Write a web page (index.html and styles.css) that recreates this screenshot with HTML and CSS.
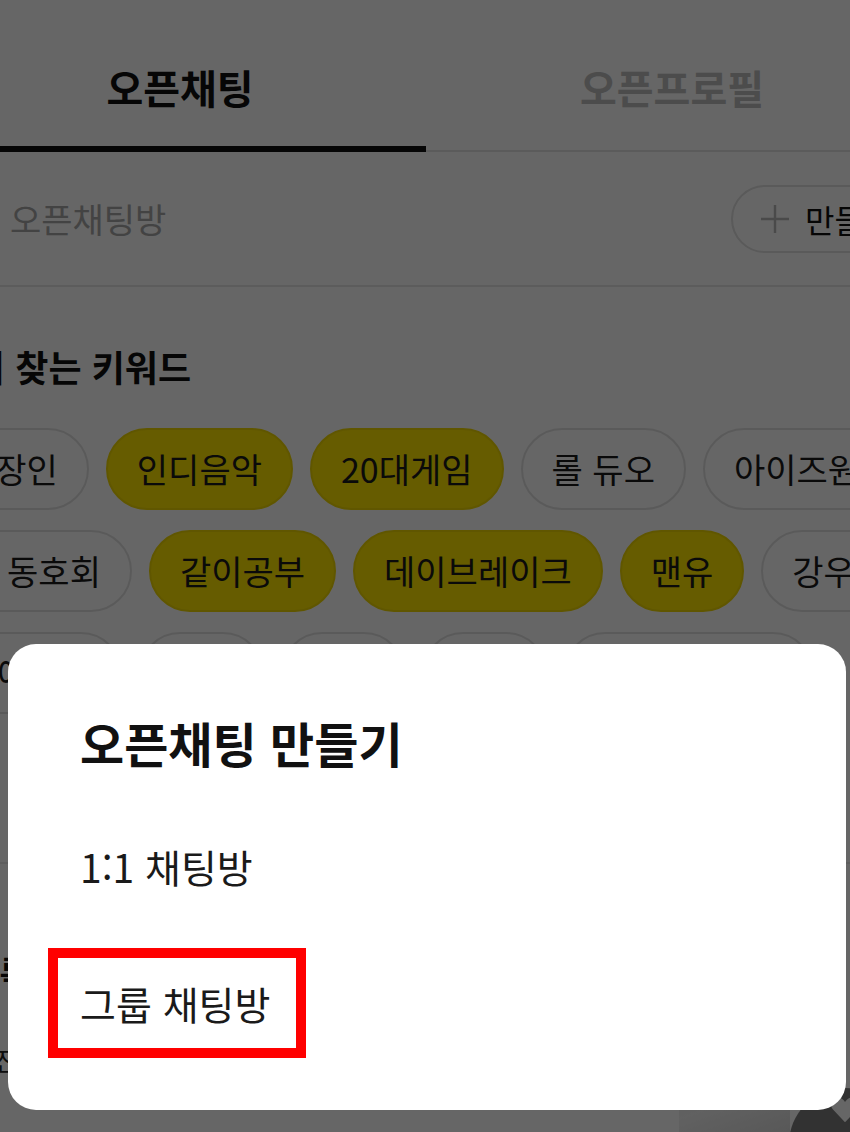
FILE: index.html
```html
<!DOCTYPE html>
<html lang="ko">
<head>
    <meta charset="UTF-8">
    <meta name="viewport" content="width=device-width, initial-scale=1.0">
    <title>오픈채팅</title>
    <link rel="stylesheet" href="styles.css">
</head>
<body>
    <div class="app">
        <nav class="tabs">
            <div class="tab tab-active">오픈채팅</div>
            <div class="tab">오픈프로필</div>
        </nav>

        <div class="search-row">
            <span class="search-label">오픈채팅방</span>
            <button class="create-btn">
                <svg class="plus-icon" viewBox="0 0 30 30" width="30" height="30">
                    <path d="M15 1 V29 M1 15 H29" stroke="currentColor" stroke-width="2.4" fill="none"/>
                </svg>
                만들기
            </button>
        </div>

        <section class="keywords">
            <h2 class="section-title">많이 찾는 키워드</h2>
            <div class="chip-rows">
                <div class="chip-row row-1">
                    <span class="chip">직장인</span>
                    <span class="chip chip-hot">인디음악</span>
                    <span class="chip chip-hot">20대게임</span>
                    <span class="chip">롤 듀오</span>
                    <span class="chip">아이즈원</span>
                </div>
                <div class="chip-row row-2">
                    <span class="chip">독서 동호회</span>
                    <span class="chip chip-hot">같이공부</span>
                    <span class="chip chip-hot">데이브레이크</span>
                    <span class="chip chip-hot">맨유</span>
                    <span class="chip">강우지</span>
                </div>
                <div class="chip-row row-3">
                    <span class="chip">연애상담</span>
                    <span class="chip">축구</span>
                    <span class="chip">주식</span>
                    <span class="chip">여행</span>
                    <span class="chip">해외축구중계</span>
                </div>
            </div>
        </section>

        <section class="feed">
            <div class="feed-item">
                <p class="feed-name">이 오픈채팅</p>
            </div>
            <div class="feed-item feed-item-tall">
                <div class="feed-text">
                    <p class="feed-name">등록된 오픈채팅</p>
                    <p class="feed-desc">사진 공유방</p>
                </div>
                <div class="thumb"></div>
            </div>
        </section>

        <div class="fab">
            <svg viewBox="0 0 40 36" width="30" height="27">
                <path d="M20 35 L4 18 C-2 11 3 1 11 2 C15 2 18 5 20 8 C22 5 25 2 29 2 C37 1 42 11 36 18 Z" fill="#fff"/>
            </svg>
        </div>
    </div>

    <div class="scrim"></div>

    <div class="sheet">
        <h1 class="sheet-title">오픈채팅 만들기</h1>
        <div class="sheet-option">1:1 채팅방</div>
        <div class="sheet-option sheet-option-marked">그룹 채팅방</div>
    </div>
</body>
</html>
```

FILE: styles.css
```css
body {
    font-family: "Noto Sans CJK KR", "Noto Sans", sans-serif;
    background-color: #fff;
    color: #111;
    margin: 0;
    padding: 0;
    overflow: hidden;
}

.app {
    position: relative;
    width: 850px;
    height: 1132px;
    overflow: hidden;
}

/* tabs */
.tabs {
    display: grid;
    grid-template-columns: 492px 492px;
    width: 984px;
    margin-left: -66px;
}

.tab {
    height: 152px;
    box-sizing: border-box;
    display: flex;
    align-items: center;
    justify-content: center;
    padding-top: 24px;
    font-size: 40px;
    font-weight: 700;
    color: #bdbdbd;
    border-bottom: 2px solid #e4e4e4;
}

.tab-active {
    padding-top: 28px;
    color: #111;
    border-bottom: 6px solid #111;
}

/* search */
.search-row {
    height: 135px;
    box-sizing: border-box;
    display: flex;
    align-items: center;
    padding-left: 10px;
    border-bottom: 2px solid #e6e6e6;
}

.search-label {
    flex: 1;
    font-size: 34px;
    color: #a8a8a8;
}

.create-btn {
    flex-shrink: 0;
    width: 200px;
    height: 68px;
    margin-right: -81px;
    box-sizing: border-box;
    display: flex;
    align-items: center;
    gap: 15px;
    padding: 0 0 0 27px;
    background-color: #fff;
    border: 2px solid #e0e0e0;
    border-radius: 34px;
    font-family: inherit;
    font-size: 32px;
    color: #111;
}

.plus-icon {
    color: #b8b8b8;
}

/* keywords */
.keywords {
    padding-top: 55px;
}

.section-title {
    margin: 0 0 38px -61px;
    font-size: 36px;
    line-height: 48px;
    font-weight: 700;
    white-space: nowrap;
}

.chip-rows {
    display: flex;
    flex-direction: column;
    gap: 20px;
}

.chip-row {
    display: flex;
    gap: 17px;
    white-space: nowrap;
}

.row-1 {
    margin-left: -67px;
}

.row-2 {
    margin-left: -96px;
}

.row-3 {
    margin-left: -65px;
}

.chip {
    flex-shrink: 0;
    height: 82px;
    box-sizing: border-box;
    padding: 0 29px;
    border: 2px solid #e2e2e2;
    border-radius: 41px;
    background-color: #fff;
    font-size: 34px;
    line-height: 78px;
    color: #1a1a1a;
}

.chip-hot {
    background-color: #fee500;
    border-color: #f0d800;
}

/* list under the keywords */
.feed-item {
    height: 150px;
    box-sizing: border-box;
    display: flex;
    align-items: center;
    border-bottom: 2px solid #ececec;
}

.feed-item-tall {
    height: 420px;
    align-items: flex-start;
    justify-content: space-between;
    padding: 84px 60px 0 0;
    border-bottom: none;
}

.feed-text {
    margin-left: -30px;
}

.feed-name {
    margin: 0 0 0 -30px;
    font-size: 32px;
    line-height: 44px;
    font-weight: 700;
}

.feed-text .feed-name {
    margin-left: 0;
}

.feed-desc {
    margin: 50px 0 0;
    font-size: 26px;
    line-height: 36px;
    color: #222;
}

.thumb {
    width: 111px;
    height: 140px;
    margin-top: 90px;
    border-radius: 4px;
    background: linear-gradient(160deg, #d8d8d8, #f2f2f2 45%, #c9c9c9);
}

.fab {
    position: absolute;
    left: 789px;
    top: 1088px;
    width: 112px;
    height: 112px;
    border-radius: 50%;
    background-color: #7e7e7e;
    display: flex;
    justify-content: center;
    padding-top: 8px;
    box-sizing: border-box;
}

/* dialog */
.scrim {
    position: fixed;
    inset: 0;
    background-color: rgba(0, 0, 0, 0.6);
}

.sheet {
    position: fixed;
    left: 8px;
    right: 4px;
    top: 644px;
    bottom: 22px;
    box-sizing: border-box;
    padding: 68px 0 0 72px;
    background-color: #fff;
    border-radius: 28px;
}

.sheet-title {
    margin: 0 0 39px;
    font-size: 48px;
    line-height: 60px;
    font-weight: 700;
    color: #111;
}

.sheet-option {
    height: 110px;
    box-sizing: border-box;
    display: flex;
    align-items: center;
    font-size: 39px;
    color: #1a1a1a;
}

.sheet-option-marked {
    width: 258px;
    margin-top: 27px;
    margin-left: -32px;
    padding: 0 0 0 22px;
    border: 10px solid #ff0000;
    white-space: nowrap;
}
```
